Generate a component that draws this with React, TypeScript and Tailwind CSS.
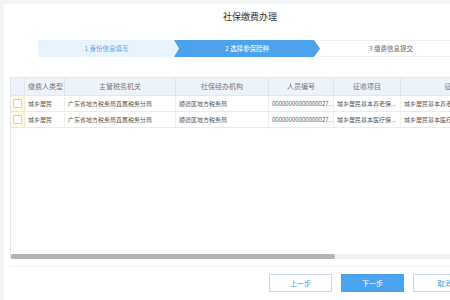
const cols = [
  { key: 'type', title: '缴费人类型', w: 'w-[40px]', align: 'justify-start' },
  { key: 'tax', title: '主管税务机关', w: 'w-[111px]', align: 'justify-center' },
  { key: 'org', title: '社保经办机构', w: 'w-[93px]', align: 'justify-center' },
  { key: 'no', title: '人员编号', w: 'w-[65px]', align: 'justify-center' },
  { key: 'item', title: '征收项目', w: 'w-[67px]', align: 'justify-center' },
  { key: 'sub', title: '征收品目', w: 'w-[116px]', align: 'justify-center' },
]

const rows = [
  {
    type: '城乡居民',
    tax: '广东省地方税务局直属税务分局',
    org: '顺德区地方税务局',
    no: '00000000000000027...',
    item: '城乡居民基本养老保...',
    sub: '城乡居民基本养老保险',
  },
  {
    type: '城乡居民',
    tax: '广东省地方税务局直属税务分局',
    org: '顺德区地方税务局',
    no: '00000000000000027...',
    item: '城乡居民基本医疗保...',
    sub: '城乡居民基本医疗保险',
  },
]

function App() {
  return (
    <div
      className="w-[450px] h-[300px] overflow-hidden bg-[#f3f4f5] pt-[4px] pl-[4px]"
      style={{ fontFamily: '"Noto Sans CJK SC", "Noto Sans", sans-serif' }}
    >
      <div className="w-[492px] h-[300px] bg-white flex flex-col">
        {/* title */}
        <div className="h-[26px] flex items-center justify-center text-[9px] text-[#333]">
          社保缴费办理
        </div>

        {/* steps */}
        <div className="mt-[10px] ml-[34px] w-[424px] h-[17px] flex text-[6.5px]">
          <div className="w-[141px] shrink-0 bg-[#e9f3fd] text-[#5aa5e8] flex items-center justify-center pr-[4px]">
            1 身份信息填写
          </div>
          <div
            className="ml-[-5px] w-[146px] shrink-0 bg-[#4ca3ec] text-white flex items-center justify-center"
            style={{ clipPath: 'polygon(0 0, calc(100% - 6px) 0, 100% 50%, calc(100% - 6px) 100%, 0 100%, 5px 50%)' }}
          >
            2 选择参保险种
          </div>
          <div className="ml-[-4px] flex-1 border-y border-[#eef1f4] text-[#666] flex items-center justify-center pl-[4px]">
            3 缴费信息提交
          </div>
        </div>

        {/* table */}
        <div className="mt-[20px] ml-[6px] h-[182px] border-l border-[#e3e7ec] flex flex-col">
          <div className="flex-1">
            <div className="flex h-[19px] bg-[#eef3f9] border-y border-[#e3e8ee] text-[7px] text-[#777]">
              <div className="w-[14px] shrink-0 border-r border-[#e0e5eb]" />
              {cols.map((c) => (
                <div
                  key={c.key}
                  className={`${c.w} shrink-0 flex items-center ${c.align} px-[3px] border-r border-[#e0e5eb] whitespace-nowrap`}
                >
                  {c.title}
                </div>
              ))}
            </div>
            {rows.map((r, i) => (
              <div key={i} className="flex h-[16px] border-b border-[#e8eaed] text-[6px] text-[#555]">
                <div className="w-[14px] shrink-0 bg-[#fffbe3] border-r border-[#eee9cc] flex items-center justify-center">
                  <div className="w-[9px] h-[9px] bg-white border border-[#cfcfcf] rounded-[1px]" />
                </div>
                {cols.map((c) => (
                  <div
                    key={c.key}
                    className={`${c.w} shrink-0 flex items-center px-[3px] border-r border-[#eceef0] whitespace-nowrap overflow-hidden`}
                  >
                    {(r as Record<string, string>)[c.key]}
                  </div>
                ))}
              </div>
            ))}
          </div>
          {/* horizontal scrollbar */}
          <div className="h-[5px] bg-[#efefef] flex">
            <div className="w-[324px] h-full bg-[#b3b3b3] rounded-[2px]" />
          </div>
        </div>

        <div className="mt-[7px] ml-[6px] border-t border-[#f0f1f2]" />

        {/* buttons */}
        <div className="mt-[7px] ml-[265px] flex gap-[9px] text-[7px]">
          <div className="w-[63px] h-[18px] border border-[#c8d8ea] text-[#4a9be0] flex items-center justify-center">
            上一步
          </div>
          <div className="w-[63px] h-[18px] bg-[#4ba3ee] text-white flex items-center justify-center">
            下一步
          </div>
          <div className="w-[63px] h-[18px] border border-[#c8d8ea] text-[#4a9be0] flex items-center justify-center">
            取消
          </div>
        </div>
      </div>
    </div>
  )
}

export default App
